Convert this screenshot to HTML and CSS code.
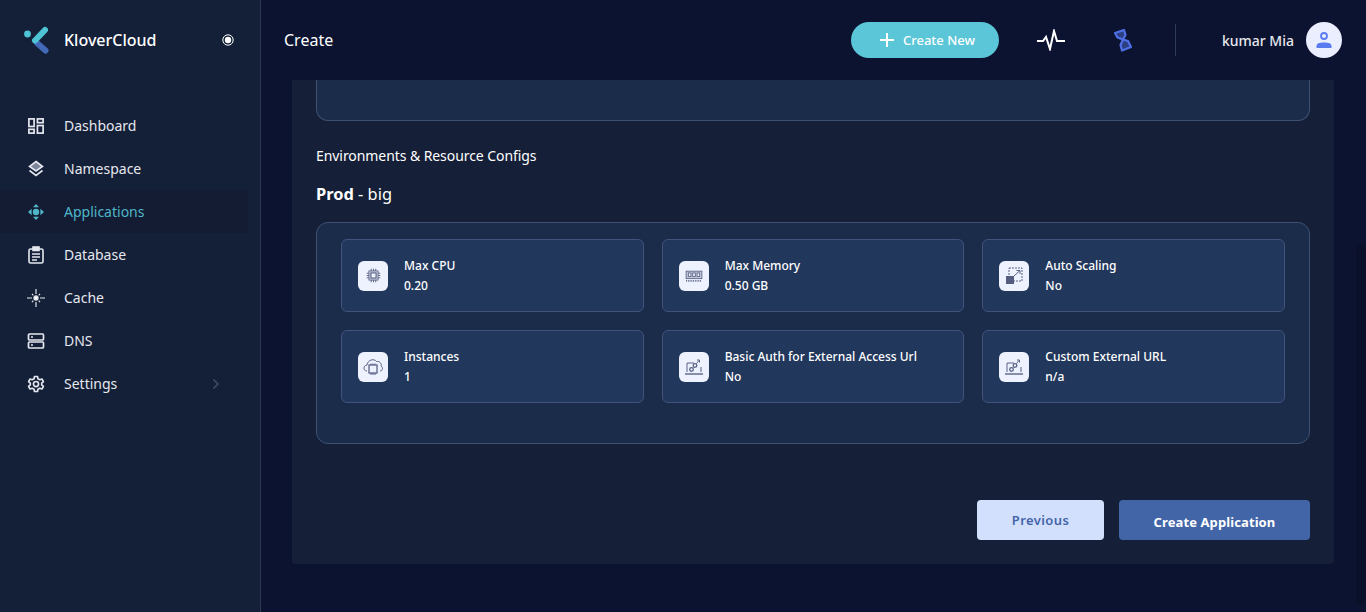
FILE: index.html
```html
<!DOCTYPE html>
<html lang="en">
<head>
	<title>KloverCloud - Create</title>
	<link rel="stylesheet" href="styles.css">
</head>

<body>
	<div class="app">
		<aside class="sidebar">
			<div class="brand">
				<svg class="brand-logo" width="26" height="28" viewBox="0 0 26 28">
					<circle cx="4.5" cy="8" r="3.4" fill="#4fc3d6"/>
					<path d="M14 17 L22.5 24.5" stroke="#4269b8" stroke-width="6" stroke-linecap="round"/>
					<path d="M12 14.5 L22 4" stroke="#4fc3d6" stroke-width="6" stroke-linecap="round"/>
				</svg>
				<span class="brand-name">KloverCloud</span>
				<svg class="brand-dot" width="12" height="12" viewBox="0 0 12 12">
					<circle cx="6" cy="6" r="5.2" fill="none" stroke="#fff" stroke-width="1"/>
					<circle cx="6" cy="6" r="3.2" fill="#fff"/>
				</svg>
			</div>

			<nav class="menu">
				<a class="menu-item">
					<svg width="18" height="18" viewBox="-0.5 -0.5 19 19" fill="none" stroke="#e4e7ee" stroke-width="1.8">
						<rect x="1.5" y="1.5" width="5.5" height="8"/>
						<rect x="10.5" y="1.5" width="6" height="4"/>
						<rect x="10.5" y="8.5" width="6" height="8"/>
						<rect x="1.5" y="12.5" width="5.5" height="4"/>
					</svg>
					<span>Dashboard</span>
				</a>
				<a class="menu-item">
					<svg width="18" height="18" viewBox="0 0 18 18" fill="none" stroke="#e4e7ee" stroke-width="1.6">
						<path d="M9 1.5 L15.5 6.5 L9 11 L2.5 6.5 Z" fill="#7d859b"/>
						<path d="M2.5 10.5 L9 15.5 L15.5 10.5"/>
					</svg>
					<span>Namespace</span>
				</a>
				<a class="menu-item active">
					<svg width="18" height="18" viewBox="0 0 18 18" fill="#4fb6c9">
						<circle cx="9" cy="9" r="3.2"/>
						<path d="M9 1 L12 4.2 H6 Z"/>
						<path d="M9 17 L12 13.8 H6 Z"/>
						<path d="M1 9 L4.6 5.8 V12.2 Z"/>
						<path d="M17 9 L13.4 5.8 V12.2 Z"/>
					</svg>
					<span>Applications</span>
				</a>
				<a class="menu-item">
					<svg width="18" height="18" viewBox="0 0 18 18" fill="none" stroke="#e4e7ee" stroke-width="1.6">
						<rect x="2" y="3" width="14" height="14" rx="1.5"/>
						<rect x="6" y="1" width="6" height="3.5" fill="#e4e7ee"/>
						<path d="M5 8 H13 M5 11 H13 M5 14 H10"/>
					</svg>
					<span>Database</span>
				</a>
				<a class="menu-item">
					<svg width="20" height="20" viewBox="0 0 20 20" fill="none" stroke="#e4e7ee" stroke-width="1.3">
						<circle cx="10" cy="10" r="2.3" fill="#fff"/>
						<path d="M10 0 V5.5 M10 14.5 V20 M0 10 H5.5 M14.5 10 H20 M5.5 5.5 L7 7 M14.5 5.5 L13 7 M5.5 14.5 L7 13 M14.5 14.5 L13 13"/>
					</svg>
					<span>Cache</span>
				</a>
				<a class="menu-item">
					<svg width="18" height="18" viewBox="0 0 18 18" fill="none" stroke="#e4e7ee" stroke-width="1.7">
						<rect x="1.5" y="2" width="15" height="6" rx="1"/>
						<rect x="1.5" y="10" width="15" height="6" rx="1"/>
						<path d="M4 5 H6 M4 13 H6"/>
					</svg>
					<span>DNS</span>
				</a>
				<a class="menu-item">
					<svg width="18" height="18" viewBox="0 0 24 24" fill="none" stroke="#e4e7ee" stroke-width="2.2" stroke-linejoin="round">
						<circle cx="12" cy="12" r="3.4"/>
						<path d="M10 2 H14 L14.6 5 L17 6.3 L19.9 5.3 L21.9 8.8 L19.6 10.8 V13.2 L21.9 15.2 L19.9 18.7 L17 17.7 L14.6 19 L14 22 H10 L9.4 19 L7 17.7 L4.1 18.7 L2.1 15.2 L4.4 13.2 V10.8 L2.1 8.8 L4.1 5.3 L7 6.3 L9.4 5 Z"/>
					</svg>
					<span>Settings</span>
					<svg class="menu-arrow" width="8" height="12" viewBox="0 0 8 12" fill="none" stroke="#3f4a68" stroke-width="1.6">
						<path d="M1.5 1.5 L6 6 L1.5 10.5"/>
					</svg>
				</a>
			</nav>
		</aside>

		<div class="main">
			<header class="topbar">
				<h1 class="page-title">Create</h1>
				<button class="btn-new">
					<svg width="16" height="16" viewBox="0 0 16 16" stroke="#fff" stroke-width="2"><path d="M8 1 V15 M1 8 H15"/></svg>
					Create New
				</button>
				<svg class="pulse" width="28" height="22" viewBox="0 0 28 22" fill="none" stroke="#fff" stroke-width="2">
					<path d="M0 12 H6 L9 8 L13 20 L17 2 L20 12 H28"/>
				</svg>
				<svg class="hourglass" width="20" height="24" viewBox="0 0 20 24" fill="#2c3f80" stroke="#4f6fe6" stroke-width="2.2" stroke-linejoin="round">
					<path d="M2 5 L11 2 L12.5 7 L10 11.5 L4.5 9.5 Z"/>
					<path d="M10 11.5 L15 13 L18 19 L9 22.5 L7.5 17 Z"/>
				</svg>
				<div class="divider"></div>
				<span class="user-name">kumar Mia</span>
				<div class="avatar">
					<svg width="20" height="20" viewBox="0 0 20 20" fill="none" stroke="#5b7cf0" stroke-width="1.8">
						<circle cx="10" cy="6" r="3"/>
						<path d="M2.5 18 V16 C2.5 13.5 5 12.5 10 12.5 C15 12.5 17.5 13.5 17.5 16 V18 Z" fill="#5b7cf0" stroke="none"/>
					</svg>
				</div>
			</header>

			<main class="panel">
				<div class="box box-top"></div>
				<p class="section-label">Environments &amp; Resource Configs</p>
				<h2 class="env-title"><b>Prod</b> - big</h2>

				<div class="box box-env">
					<div class="config-grid">
						<div class="config-card">
							<div class="config-icon">
								<svg width="15" height="15" viewBox="0 0 20 20" fill="none" stroke="#5a6385" stroke-width="1.3">
									<rect x="4" y="4" width="12" height="12"/>
									<rect x="6.5" y="6.5" width="7" height="7" stroke-width="1.6"/>
									<path d="M7 1 V4 M10 1 V4 M13 1 V4 M7 16 V19 M10 16 V19 M13 16 V19 M1 7 H4 M1 10 H4 M1 13 H4 M16 7 H19 M16 10 H19 M16 13 H19"/>
								</svg>
							</div>
							<div><div class="config-name">Max CPU</div><div class="config-value">0.20</div></div>
						</div>
						<div class="config-card">
							<div class="config-icon">
								<svg width="18" height="14" viewBox="0 0 20 16" fill="none" stroke="#5a6385" stroke-width="1">
									<rect x="1" y="2.5" width="18" height="8.5" fill="#c5cadb"/>
									<rect x="3.5" y="4.5" width="3" height="4" fill="#eef2fe"/>
									<rect x="8.5" y="4.5" width="3" height="4" fill="#eef2fe"/>
									<rect x="13.5" y="4.5" width="3" height="4" fill="#eef2fe"/>
									<path d="M1 13.5 H19" stroke-width="2" stroke-dasharray="1 1"/>
								</svg>
							</div>
							<div><div class="config-name">Max Memory</div><div class="config-value">0.50 GB</div></div>
						</div>
						<div class="config-card">
							<div class="config-icon">
								<svg width="17" height="17" viewBox="0 0 17 17" fill="none" stroke="#5a6385">
									<rect x="3" y="1" width="13" height="13" stroke-dasharray="2 1"/>
									<rect x="0" y="9" width="8" height="8" fill="#545c80" stroke="none"/>
									<path d="M8 9 L14 3.5 M10.5 3.5 H14 V7"/>
								</svg>
							</div>
							<div><div class="config-name">Auto Scaling</div><div class="config-value">No</div></div>
						</div>
						<div class="config-card">
							<div class="config-icon">
								<svg width="20" height="18" viewBox="0 0 20 18" fill="none" stroke="#5a6385">
									<path d="M4 13 C0 13 0 7.5 4 7 C4.5 2 11 0 13.5 3.5 C17 3 19 6 18 8 C20.5 9.5 19.5 13 17 13"/>
									<rect x="6" y="7" width="8" height="8" stroke-width="1.3" fill="#eef2fe"/>
									<path d="M8 5.5 V7 M10 5.5 V7 M12 5.5 V7 M8 15 V17 M10 15 V17 M12 15 V17"/>
								</svg>
							</div>
							<div><div class="config-name">Instances</div><div class="config-value">1</div></div>
						</div>
						<div class="config-card">
							<div class="config-icon">
								<svg width="20" height="20" viewBox="0 0 20 20" fill="none" stroke="#5a6385">
									<path d="M3 15 V6 H10 M17 10 V15"/>
									<path d="M1 17 H19" stroke-width="1.4"/>
									<circle cx="7.5" cy="12.5" r="1.8" stroke-width="1.3"/>
									<circle cx="11" cy="8.5" r="1.8" stroke-width="1.3"/>
									<path d="M9 10.5 L9.5 10 M12.5 6.5 L15 3.5 M13 3 H15.5 V5.5"/>
								</svg>
							</div>
							<div><div class="config-name">Basic Auth for External Access Url</div><div class="config-value">No</div></div>
						</div>
						<div class="config-card">
							<div class="config-icon">
								<svg width="20" height="20" viewBox="0 0 20 20" fill="none" stroke="#5a6385">
									<path d="M3 15 V6 H10 M17 10 V15"/>
									<path d="M1 17 H19" stroke-width="1.4"/>
									<circle cx="7.5" cy="12.5" r="1.8" stroke-width="1.3"/>
									<circle cx="11" cy="8.5" r="1.8" stroke-width="1.3"/>
									<path d="M9 10.5 L9.5 10 M12.5 6.5 L15 3.5 M13 3 H15.5 V5.5"/>
								</svg>
							</div>
							<div><div class="config-name">Custom External URL</div><div class="config-value">n/a</div></div>
						</div>
					</div>
				</div>

				<div class="actions">
					<button class="btn btn-prev">Previous</button>
					<button class="btn btn-create">Create Application</button>
				</div>
			</main>
		</div>
	</div>
	<div class="scroll-thumb"></div>
</body>

</html>
```

FILE: styles.css
```css
* {
	box-sizing: border-box;
}

html, body {
	height: 100%;
	margin: 0;
	overflow: hidden;
}

body {
	font-family: "Noto Sans", sans-serif;
	background: #0c1330;
	color: #fff;
}

.app {
	display: flex;
	height: 612px;
}

/* sidebar */
.sidebar {
	width: 261px;
	flex-shrink: 0;
	background: #141f38;
	border-right: 1px solid #2b3853;
}

.brand {
	display: flex;
	align-items: center;
	height: 80px;
	padding-left: 23px;
	padding-right: 26px;
}

.brand-logo {
	margin-right: 15px;
}

.brand-name {
	flex: 1;
	font-size: 16px;
	font-weight: 500;
}

.menu {
	padding-top: 24px;
}

.menu-item {
	display: flex;
	align-items: center;
	height: 43px;
	width: 248px;
	padding-left: 27px;
	font-size: 14px;
	color: #e6e8ee;
}

.menu-item svg:first-child {
	width: 18px;
	margin-right: 19px;
}

.menu-item.active {
	background: #131c33;
	color: #4fb6c9;
}

.menu-arrow {
	margin-left: auto;
	margin-right: 28px;
}

/* header */
.main {
	flex: 1;
	min-width: 0;
	display: flex;
	flex-direction: column;
}

.topbar {
	display: flex;
	align-items: center;
	height: 80px;
	flex-shrink: 0;
	padding-left: 23px;
	padding-right: 24px;
}

.page-title {
	flex: 1;
	margin: 0;
	font-size: 16px;
	font-weight: 400;
}

.btn-new {
	display: flex;
	align-items: center;
	justify-content: center;
	gap: 8px;
	width: 148px;
	height: 36px;
	padding-left: 10px;
	padding-right: 6px;
	border: 0;
	border-radius: 18px;
	background: #5bc6d8;
	color: #fff;
	font-family: inherit;
	font-size: 13px;
	font-weight: 500;
}

.pulse {
	margin-left: 38px;
}

.hourglass {
	margin-left: 48px;
}

.divider {
	width: 1px;
	height: 32px;
	margin-left: 42px;
	background: #2f3c5c;
}

.user-name {
	margin-left: 46px;
	font-size: 14px;
	font-weight: 500;
	color: #e6e8ee;
}

.avatar {
	display: flex;
	align-items: center;
	justify-content: center;
	width: 36px;
	height: 36px;
	margin-left: 12px;
	border-radius: 50%;
	background: #eaeeff;
}

/* content */
.panel {
	width: 1042px;
	height: 484px;
	margin-left: 31px;
	padding: 0 24px;
	background: #151f37;
	border-radius: 0 0 4px 4px;
}

.box {
	border: 1px solid #3e5172;
	border-radius: 12px;
	background: #1b2c4b;
}

.box-top {
	height: 41px;
	border-top: 0;
	border-radius: 0 0 12px 12px;
}

.section-label {
	margin: 25px 0 0;
	font-size: 14px;
	line-height: 19px;
	letter-spacing: -0.07px;
}

.env-title {
	margin: 18px 0 0;
	font-size: 16.4px;
	line-height: 22px;
	font-weight: 400;
}

.env-title b {
	font-weight: 700;
}

.box-env {
	height: 222px;
	margin-top: 17px;
	padding: 16px 24px 0;
}

.config-grid {
	display: grid;
	grid-template-columns: repeat(3, 1fr);
	grid-auto-rows: 73px;
	column-gap: 18px;
	row-gap: 18px;
}

.config-card {
	display: flex;
	align-items: center;
	gap: 16px;
	padding-left: 16px;
	background: #22375c;
	border: 1px solid #42527a;
	border-radius: 6px;
}

.config-icon {
	display: flex;
	align-items: center;
	justify-content: center;
	width: 30px;
	height: 30px;
	flex-shrink: 0;
	background: #eef2fe;
	border-radius: 6px;
}

.config-name {
	font-size: 12px;
	line-height: 16px;
	font-weight: 500;
}

.config-value {
	margin-top: 4px;
	font-size: 12px;
	line-height: 16px;
	font-weight: 500;
}

.actions {
	display: flex;
	justify-content: flex-end;
	gap: 15px;
	margin-top: 56px;
}

.btn {
	height: 40px;
	border: 0;
	border-radius: 4px;
	font-family: inherit;
	font-size: 13px;
	font-weight: 600;
}

.btn-prev {
	width: 127px;
	background: #d2e0fe;
	color: #4465a8;
	letter-spacing: 0.4px;
}

.btn-create {
	width: 191px;
	padding-top: 4px;
	background: #4265a8;
	color: #fff;
	font-weight: 700;
	letter-spacing: 0.1px;
}

.scroll-thumb {
	position: absolute;
	top: 245px;
	right: 0;
	width: 10px;
	height: 360px;
	border-radius: 5px;
	background: #0a1027;
}
```
